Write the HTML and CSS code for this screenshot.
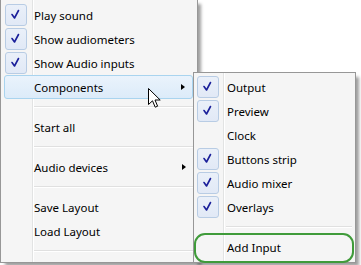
FILE: index.html
```html
<!DOCTYPE html>
<html>
<head>
<meta charset="utf-8">
<link rel="stylesheet" href="styles.css">
</head>
<body>
<div class="stage">
  <div class="menu main">
    <div class="item"><span class="check"><svg viewBox="0 0 22 22"><path d="M7 10.5 L9.5 14 L13.5 6.5"/></svg></span>Play sound</div>
    <div class="item"><span class="check"><svg viewBox="0 0 22 22"><path d="M7 10.5 L9.5 14 L13.5 6.5"/></svg></span>Show audiometers</div>
    <div class="item"><span class="check"><svg viewBox="0 0 22 22"><path d="M7 10.5 L9.5 14 L13.5 6.5"/></svg></span>Show Audio inputs</div>
    <div class="item hot">Components<span class="arrow"></span></div>
    <div class="sep"></div>
    <div class="item">Start all</div>
    <div class="sep"></div>
    <div class="item">Audio devices<span class="arrow"></span></div>
    <div class="sep"></div>
    <div class="item">Save Layout</div>
    <div class="item">Load Layout</div>
    <div class="sep"></div>
  </div>

  <div class="menu sub">
    <div class="item"><span class="check"><svg viewBox="0 0 22 22"><path d="M7 10.5 L9.5 14 L13.5 6.5"/></svg></span>Output</div>
    <div class="item"><span class="check"><svg viewBox="0 0 22 22"><path d="M7 10.5 L9.5 14 L13.5 6.5"/></svg></span>Preview</div>
    <div class="item">Clock</div>
    <div class="item"><span class="check"><svg viewBox="0 0 22 22"><path d="M7 10.5 L9.5 14 L13.5 6.5"/></svg></span>Buttons strip</div>
    <div class="item"><span class="check"><svg viewBox="0 0 22 22"><path d="M7 10.5 L9.5 14 L13.5 6.5"/></svg></span>Audio mixer</div>
    <div class="item"><span class="check"><svg viewBox="0 0 22 22"><path d="M7 10.5 L9.5 14 L13.5 6.5"/></svg></span>Overlays</div>
    <div class="sep"></div>
    <div class="item mark">Add Input</div>
  </div>

  <svg class="cursor" width="14" height="21" viewBox="0 0 14 21">
    <path d="M0.5 0.5 L0.5 16.5 L4.5 12.8 L7.2 19.2 L9.6 18.2 L7 12 L12.2 12 Z" fill="#fff" stroke="#000" stroke-width="1" stroke-linejoin="miter"/>
  </svg>
</div>
</body>
</html>
```

FILE: styles.css
```css
html, body {
  margin: 0;
  padding: 0;
  background: #ffffff;
  overflow: hidden;
}

.stage {
  position: relative;
  width: 361px;
  height: 265px;
  overflow: hidden;
  font-family: "Noto Sans", "Open Sans", sans-serif;
  font-size: 11.5px;
  color: #000;
}

.menu {
  box-sizing: border-box;
  background-color: #f5f5f5;
  border: 1px solid #979797;
  box-shadow: 4px 4px 3px -1px rgba(0, 0, 0, 0.38);
}

.main {
  width: 198px;
  margin-top: -1px;
  padding: 3px 3px 3px 3px;
  border-top-color: #f5f5f5;
  background-image: linear-gradient(to right,
    transparent 31px, #e2e3e3 31px, #e2e3e3 32px,
    #ffffff 32px, #ffffff 33px, transparent 33px);
}

.sub {
  position: absolute;
  left: 193px;
  top: 72px;
  width: 163px;
  padding: 2px 2px 3px 2px;
  background-image: linear-gradient(to right,
    transparent 29px, #e2e3e3 29px, #e2e3e3 30px,
    #ffffff 30px, #ffffff 31px, transparent 31px);
}

.item {
  position: relative;
  box-sizing: border-box;
  height: 24px;
  line-height: 23px;
  padding-left: 29px;
  white-space: nowrap;
  border: 1px solid transparent;
  border-radius: 3px;
}

.sub .item {
  padding-left: 30px;
}

.item.hot {
  background: linear-gradient(to bottom, #eaf3fc 0%, #dcebf9 100%);
  border-color: #a9d4ef;
  margin-right: 1px;
}

.check {
  position: absolute;
  left: 0;
  top: 0;
  width: 22px;
  height: 22px;
  box-sizing: border-box;
  border: 1px solid #b8cce4;
  border-radius: 3px;
  background: linear-gradient(to bottom, #eaf0f9, #e1e9f6);
}

.check svg {
  position: absolute;
  left: -1px;
  top: -1px;
  width: 22px;
  height: 22px;
}

.check path {
  fill: none;
  stroke: #1a1f9a;
  stroke-width: 1.6;
  stroke-linecap: round;
  stroke-linejoin: round;
}

.arrow {
  position: absolute;
  right: 7px;
  top: 8px;
  width: 0;
  height: 0;
  border-top: 3.5px solid transparent;
  border-bottom: 3.5px solid transparent;
  border-left: 4px solid #000;
}

.sep {
  height: 16px;
  margin-left: 30px;
  margin-right: 1px;
  background: linear-gradient(to bottom,
    transparent 7px, #e0e0e0 7px, #e0e0e0 8px,
    #ffffff 8px, #ffffff 9px, transparent 9px);
}

.item.mark::after {
  content: "";
  position: absolute;
  left: -3px;
  top: -3px;
  width: 160px;
  height: 30px;
  box-sizing: border-box;
  border: 2px solid #3f9b3a;
  border-radius: 11px;
}

.cursor {
  position: absolute;
  left: 148px;
  top: 88px;
}
```
